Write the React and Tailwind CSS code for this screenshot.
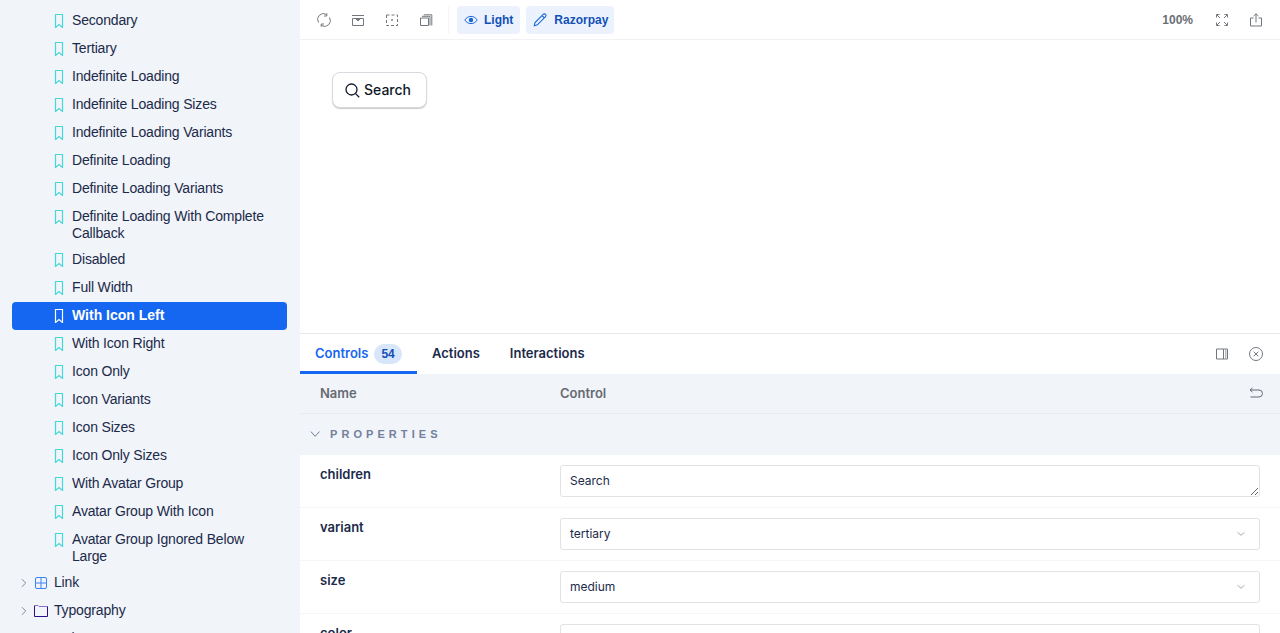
import { useState } from 'react';

const stories = [
    'Secondary', 'Tertiary', 'Indefinite Loading', 'Indefinite Loading Sizes', 'Indefinite Loading Variants',
    'Definite Loading', 'Definite Loading Variants', 'Definite Loading With Complete Callback', 'Disabled',
    'Full Width', 'With Icon Left', 'With Icon Right', 'Icon Only', 'Icon Variants', 'Icon Sizes',
    'Icon Only Sizes', 'With Avatar Group', 'Avatar Group With Icon', 'Avatar Group Ignored Below Large',
];

function Ico({ className, children, size = 14 }) {
    return (
        <svg width={size} height={size} viewBox="0 0 14 14" fill="none" stroke="currentColor" strokeWidth="1" className={className}>
            {children}
        </svg>
    );
}

function Bookmark({ active }) {
    return (
        <Ico className={`mt-[2px] shrink-0 ${active ? 'text-white' : 'text-[#45d8d6]'}`}>
            <path d="M3.5 .5h7v13L7 10.5l-3.5 3z" strokeWidth="1.2" />
        </Ico>
    );
}

function Chevron() {
    return (
        <Ico size={12} className="text-[#6f7787]">
            <path d="M4.5 2.5 9 7l-4.5 4.5" />
        </Ico>
    );
}

function StoryRow({ label }) {
    const active = label === 'With Icon Left';
    return (
        <div className={`mx-3 flex min-h-7 w-[275px] gap-[6px] rounded-[4px] py-[4.5px] pl-10 pr-4 ${active ? 'bg-[#1566f1] font-bold tracking-normal text-white' : 'text-[#1b2a4a]'}`}>
            <Bookmark active={active} />
            <span className="leading-[17px]">{label}</span>
        </div>
    );
}

function GroupRow({ label, icon }) {
    return (
        <div className="mx-3 flex h-7 items-center pl-[6px] text-[#1b2a4a]">
            <Chevron />
            <span className="ml-[2px] flex w-[18px] justify-center">{icon}</span>
            <span className="ml-1 pb-[2px] leading-[17px]">{label}</span>
        </div>
    );
}

function ToolButton({ children }) {
    return <button className="flex h-7 w-[34px] items-center justify-center text-[#73787f]">{children}</button>;
}

function Chip({ icon, label, className }) {
    return (
        <button className={`flex h-7 items-center gap-[6px] rounded-[4px] bg-[#ecf2fd] pl-[7px] text-xs font-bold text-[#1150b8] ${className}`}>
            {icon}
            {label}
        </button>
    );
}

function ControlRow({ name, children }) {
    return (
        <div className="flex h-[53px] border-b border-[#f6f6f6] pl-5 pr-5 pt-[10px]">
            <div className="w-60 text-[13px] font-semibold leading-[18px] text-[#1b2a4a]">{name}</div>
            <div className="flex-1">{children}</div>
        </div>
    );
}

function SelectControl({ value }) {
    return (
        <div className="flex h-8 items-center justify-between rounded-[3px] border border-[#e2e2e2] bg-white pl-[9px] pr-3 text-xs text-[#1b2a4a]">
            {value}
            <Ico size={12} className="text-[#9a9a9a]">
                <path d="M3 5l4 3.5L11 5" />
            </Ico>
        </div>
    );
}

export default function App() {
    const [text, setText] = useState('Search');

    return (
        <div className="flex h-[633px] w-[1280px] overflow-hidden bg-white [font-family:Inter,sans-serif]">
            <aside className="w-[300px] shrink-0 overflow-hidden bg-[#f1f4f9] pt-[7px] text-sm tracking-[-0.17px] [font-family:'Liberation_Sans',Arial,sans-serif]">
                {stories.map((s) => (
                    <StoryRow key={s} label={s} />
                ))}
                <GroupRow
                    label="Link"
                    icon={
                        <Ico className="text-[#3b82f6]">
                            <rect x="1.5" y="1.5" width="11" height="11" rx="1.5" />
                            <path d="M1.5 7h11M7 1.5v11" />
                        </Ico>
                    }
                />
                <GroupRow
                    label="Typography"
                    icon={
                        <Ico className="text-[#2a0f86]">
                            <path d="M.5 1.5v11h13v-10H5" />
                            <path d="M.5 1.5H4l1 1h8.5" stroke="#8b6fc9" />
                        </Ico>
                    }
                />
                <GroupRow label="Colors" icon={<span />} />
            </aside>

            <main className="flex min-w-0 flex-1 flex-col">
                <header className="flex h-10 shrink-0 items-center border-b border-[#f2f2f2] pl-[7px] pr-[7px]">
                    <ToolButton>
                        <Ico>
                            <path d="M1.5 9.5A5.8 5.8 0 0 1 9.5 1.5M12.5 4.5A5.8 5.8 0 0 1 4.5 12.5" />
                            <path d="M9.8 .2V3H7M4.2 13.8V11H7" />
                        </Ico>
                    </ToolButton>
                    <ToolButton>
                        <Ico>
                            <path d="M1 2.5h12M1.5 5.5h11v7h-11z" />
                            <path d="M4.5 5.5h5L7 8z" fill="currentColor" />
                        </Ico>
                    </ToolButton>
                    <ToolButton>
                        <Ico>
                            <rect x="1.5" y="2" width="11" height="10.5" strokeDasharray="3 2" />
                            <circle cx="7" cy="7" r=".9" fill="currentColor" stroke="none" />
                        </Ico>
                    </ToolButton>
                    <ToolButton>
                        <Ico>
                            <path d="M1.5 5h8v7.5h-8zM3 3.3h8v9.2M4.8 1.8h8v10.7" />
                        </Ico>
                    </ToolButton>
                    <div className="ml-[5px] mr-[8px] h-7 w-px bg-[#f6f6f6]" />
                    <div className="flex gap-[6px] [font-family:'Liberation_Sans',Arial,sans-serif]">
                        <Chip
                            label="Light"
                            className="pr-[7px]"
                            icon={
                                <Ico className="text-[#1566d6]">
                                    <path d="M.8 7C2.4 4.6 4.5 3.4 7 3.4s4.6 1.2 6.2 3.6c-1.6 2.4-3.7 3.6-6.2 3.6S2.4 9.4.8 7z" />
                                    <circle cx="7" cy="7" r="2.2" fill="currentColor" stroke="none" />
                                </Ico>
                            }
                        />
                        <Chip
                            label="Razorpay"
                            className="pr-[6px]"
                            icon={
                                <Ico size={15} className="text-[#1566d6]">
                                    <path d="M1.2 12.8l.7-3 7.6-7.6c.6-.6 1.6-.6 2.2 0s.6 1.6 0 2.2l-7.6 7.6zM8.4 3.3l2.3 2.3" />
                                </Ico>
                            }
                        />
                    </div>
                    <span className="ml-auto mr-[12px] text-xs font-bold text-[#6b6f76] [font-family:'Liberation_Sans',Arial,sans-serif]">100%</span>
                    <ToolButton>
                        <Ico>
                            <path d="M1.5 4.5v-3h3M9.5 1.5h3v3M12.5 9.5v3h-3M4.5 12.5h-3v-3M2 2l3 3M12 2 9 5M12 12 9 9M2 12l3-3" />
                        </Ico>
                    </ToolButton>
                    <ToolButton>
                        <Ico>
                            <path d="M4.5 5h-3v8h11V5h-3M7 9.5V.8M4.7 3 7 .8 9.3 3" />
                        </Ico>
                    </ToolButton>
                </header>

                <section className="h-[293px] shrink-0 p-8">
                    <button className="flex h-9 w-[95px] items-center gap-1 rounded-lg border border-[#d6d9de] bg-white pl-3 text-sm font-medium text-[#111827] shadow-[0_1px_1px_rgba(0,0,0,0.2)]">
                        <svg width="15" height="15" viewBox="0 0 15 15" fill="none" stroke="currentColor" strokeWidth="1.3">
                            <circle cx="6.5" cy="6.5" r="5.5" />
                            <path d="M10.6 10.6 14.2 14.2" />
                        </svg>
                        Search
                    </button>
                </section>

                <section className="flex min-h-0 flex-1 flex-col border-t border-[#e8e8e8]">
                    <div className="flex h-10 shrink-0 items-center pr-[7px] text-[13px] font-semibold text-[#1b2a4a]">
                        <div className="flex h-10 w-[117px] items-center gap-[6px] border-b-[3px] border-[#1566f1] pl-[15px] pt-[2px] text-[#1566f1]">
                            Controls
                            <span className="rounded-full bg-[#d8e6fb] px-[7px] text-xs font-bold leading-[20px] text-[#1150b8] [font-family:'Liberation_Sans',Arial,sans-serif]">54</span>
                        </div>
                        <div className="ml-[15px]">Actions</div>
                        <div className="ml-[30px]">Interactions</div>
                        <div className="ml-auto flex text-[#73787f]">
                            <ToolButton>
                                <Ico>
                                    <path d="M1.5 2h11v10h-11zM8.5 2v10" />
                                    <path d="M10 4h1.5M10 6h1.5M10 8h1.5M10 10h1.5" />
                                </Ico>
                            </ToolButton>
                            <ToolButton>
                                <Ico>
                                    <circle cx="7" cy="7" r="6.5" />
                                    <path d="M4.7 4.7l4.6 4.6M9.3 4.7 4.7 9.3" />
                                </Ico>
                            </ToolButton>
                        </div>
                    </div>

                    <div className="min-h-0 flex-1 overflow-hidden">
                        <div className="flex h-10 items-center border-b border-[#e9ebef] bg-[#f1f4f9] pl-5 pr-[17px] text-[13px] font-semibold text-[#666b73]">
                            <div className="w-60">Name</div>
                            <div>Control</div>
                            <Ico className="ml-auto text-[#666b73]">
                                <path d="M1 3h9a3 3 0 0 1 0 7H1.5M3.5 .9 1 3l2.5 2.1" />
                            </Ico>
                        </div>
                        <div className="flex h-[41px] items-center gap-2 bg-[#f1f4f9] pl-[10px] text-[11px] font-bold tracking-[0.37em] text-[#73819b] [font-family:'Liberation_Sans',Arial,sans-serif]">
                            <Ico size={12} className="text-[#5c6880]">
                                <path d="M1 3l5 5.5L11 3" />
                            </Ico>
                            PROPERTIES
                        </div>
                        <ControlRow name="children">
                            <textarea
                                value={text}
                                onChange={(e) => setText(e.target.value)}
                                rows={1}
                                className="block h-8 w-full resize-y rounded-[3px] border border-[#e2e2e2] bg-white px-[9px] py-[6px] text-xs leading-[18px] text-[#1b2a4a] outline-none"
                            />
                        </ControlRow>
                        <ControlRow name="variant">
                            <SelectControl value="tertiary" />
                        </ControlRow>
                        <ControlRow name="size">
                            <SelectControl value="medium" />
                        </ControlRow>
                        <ControlRow name="color">
                            <SelectControl value="primary" />
                        </ControlRow>
                    </div>
                </section>
            </main>
        </div>
    );
}
